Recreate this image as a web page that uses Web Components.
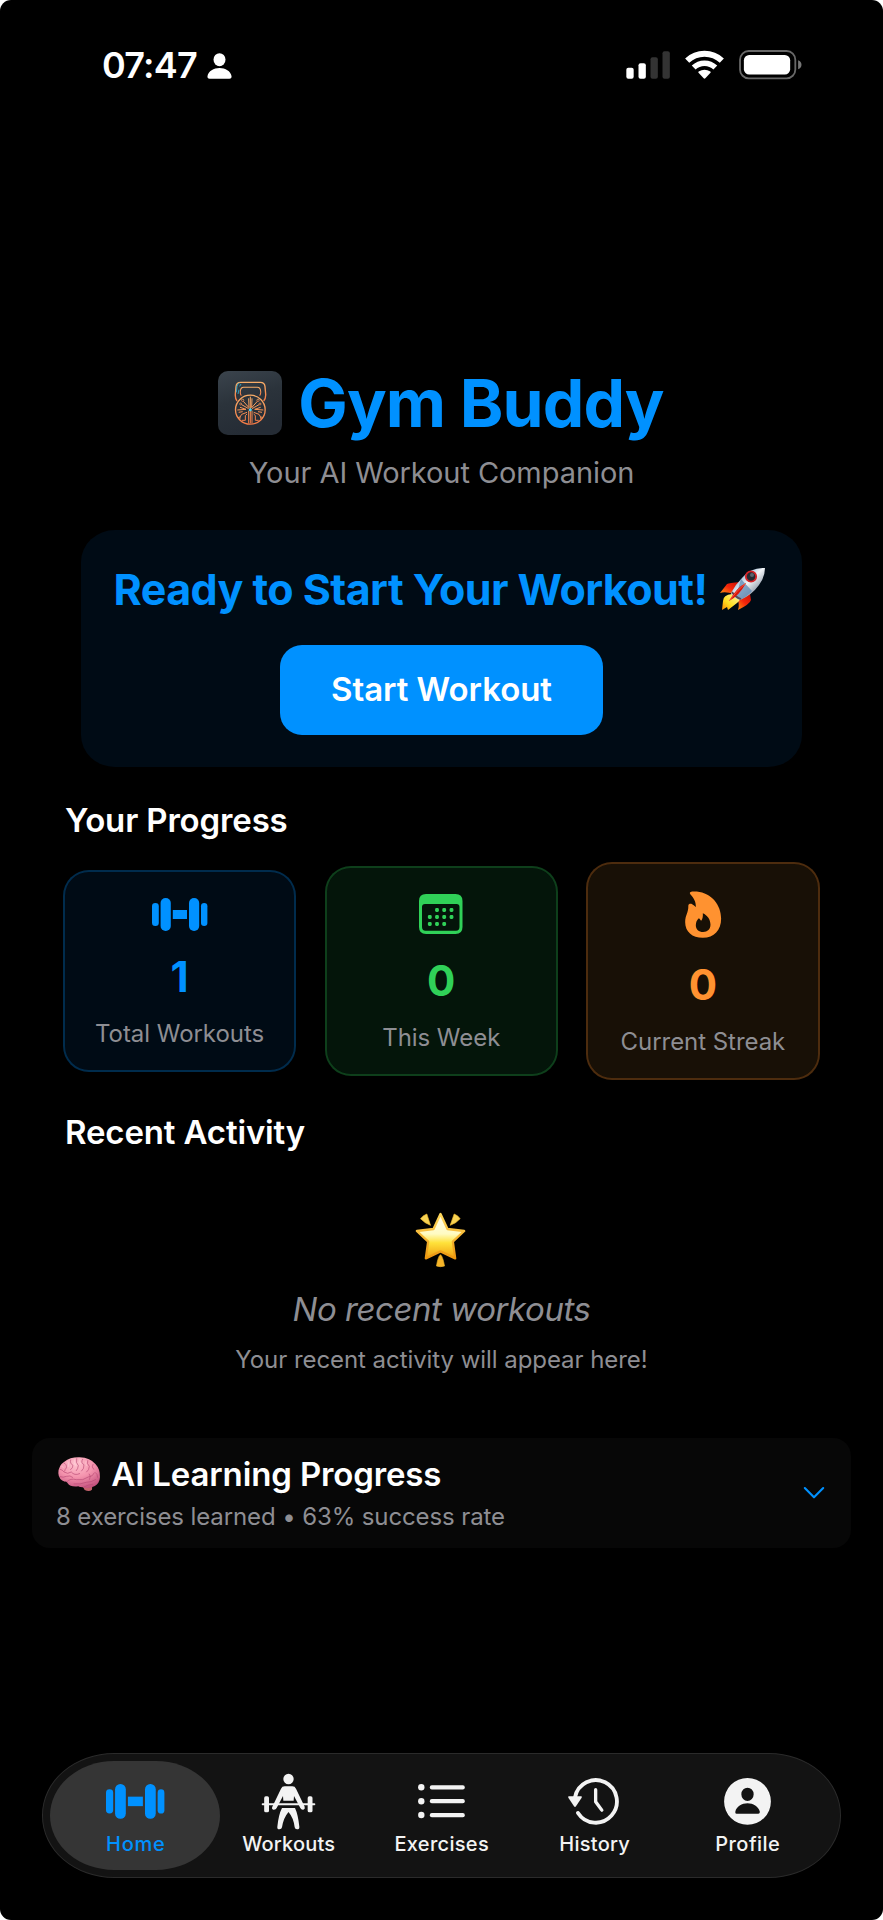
<!DOCTYPE html>
<html lang="en">
<head>
<meta charset="utf-8">
<title>Gym Buddy</title>
<style>
body { margin: 0; background: #fff; font-family: Inter, "Liberation Sans", sans-serif; }
</style>
</head>
<body>
<gym-app>
  <status-bar slot="status" time="07:47"></status-bar>
  <app-header heading="Gym Buddy">Your AI Workout Companion</app-header>
  <start-card heading="Ready to Start Your Workout!">Start Workout</start-card>
  <section-title style="margin-top:33px">Your Progress</section-title>
  <stats-row>
    <stat-card icon="dumbbell" value="1" hue="0,145,255" style="--h:202.5px;--bg:#000b15">Total Workouts</stat-card>
    <stat-card icon="calendar" value="0" hue="48,209,88" style="--h:210.5px;--bg:#04150a">This Week</stat-card>
    <stat-card icon="flame" value="0" hue="255,146,48" style="--h:218px;--bg:#181006">Current Streak</stat-card>
  </stats-row>
  <section-title style="margin-top:31.5px">Recent Activity</section-title>
  <empty-state heading="No recent workouts">Your recent activity will appear here!</empty-state>
  <learning-card heading="AI Learning Progress">8 exercises learned • 63% success rate</learning-card>
  <tab-bar slot="nav">
    <tab-item icon="dumbbellNav" active style="--ls:.755px">Home</tab-item>
    <tab-item icon="lifter" style="--ls:.19px">Workouts</tab-item>
    <tab-item icon="list" style="--ls:.31px">Exercises</tab-item>
    <tab-item icon="history" style="--ls:.26px">History</tab-item>
    <tab-item icon="profile" style="--ls:.5px">Profile</tab-item>
  </tab-bar>
</gym-app>

<script>
const DUMBBELL = '<g fill="currentColor"><rect x="0" y="5" width="6.8" height="23" rx="3.3"/><rect x="8.6" width="10.2" height="33" rx="5"/><rect x="20.8" y="12" width="14.2" height="9"/><rect x="37" width="10.2" height="33" rx="5"/><rect x="49" y="5" width="6.4" height="23" rx="3.2"/></g>';

/* name: [width, height, viewBox, markup] */
const ICONS = {
  dumbbell: [55.4, 33, '0 0 55.4 33', DUMBBELL],
  dumbbellNav: [58.4, 34.8, '0 0 55.4 33', DUMBBELL],
  person: [24.7, 26, '350 38 74 78', '<g fill="#fff"><ellipse cx="387.5" cy="58" rx="18" ry="19.5"/><path d="M358 115C353 115 350.500 112 351.500 107C354 92 370 83 387.500 83C405 83 421 92 423.500 107C424.500 112 422 115 417 115Z"/></g>'],
  signal: [44, 28, '49 47 132 84', '<rect x="50" y="97" width="22" height="33" rx="6" fill="#fff"/><rect x="86.500" y="84" width="22" height="46" rx="6" fill="#fff"/><rect x="122.500" y="66" width="22" height="64" rx="6" fill="#333"/><rect x="158.500" y="48" width="22" height="82" rx="6" fill="#333"/>'],
  wifi: [39, 29, '226 44 117 87', '<g fill="none" stroke="#fff"><path d="M232.500 76A76 76 0 0 1 336.500 76" stroke-width="18"/><path d="M252 96.500A47 47 0 0 1 317 96.500" stroke-width="16.500"/></g><path d="M266.500 112Q265 110 267 108.500Q284.500 98.500 302 108.500Q304 110 302.500 112L287 129Q284.500 131 282 129Z" fill="#fff"/>'],
  battery: [62.700, 29.300, '386.500 44.500 188 88', '<rect x="389.500" y="47.500" width="166" height="82" rx="26" fill="none" stroke="#686868" stroke-width="5.500"/><rect x="401" y="59.500" width="139" height="58.500" rx="16" fill="#fff"/><path d="M564 75Q574 79 574 88.500Q574 98 564 102Z" fill="#777"/>'],
  logo: [64, 64, '54 63 192 192', `<defs><linearGradient id="bg" x1="0" y1="0" x2="0.300" y2="1"><stop offset="0" stop-color="#3b444d"/><stop offset=".5" stop-color="#2b333b"/><stop offset="1" stop-color="#252c35"/></linearGradient><linearGradient id="or" x1="0" y1="0" x2="0" y2="1"><stop offset="0" stop-color="#f8ad68"/><stop offset="1" stop-color="#f47a46"/></linearGradient></defs>
    <rect x="54" y="63" width="192" height="192" rx="30" fill="url(#bg)"/>
    <g fill="none" stroke="url(#or)" stroke-width="4">
    <path d="M111 153Q105 145 106 132L108 110Q109 97 122 97L181 97Q194 97 195 110L197 132Q198 145 191 153"/>
    <path d="M124 137Q120 132 121 124Q122 112 131 112L172 112Q181 112 182 124Q183 132 179 137" stroke-width="3.200"/>
    <ellipse cx="151" cy="179" rx="44.500" ry="43.500" stroke-width="4"/>
    <g stroke-width="3"><path d="M151 140L151 220M146 145L147 173L130 154M156 145L155 173L172 154M146 176L125 164M120 172L138 178L112 180M156 176L177 164M182 172L164 178L190 180M146 182L146 220M156 182L156 219M141 187L125 193L119 203M141 192L136 197L136 211L126 211M161 187L177 193L183 203M161 192L166 197L166 211L176 211M116 187L128 185M186 187L174 185"/></g>
    <g stroke-width="2.200"><circle cx="128" cy="151" r="3.500"/><circle cx="174" cy="151" r="3.500"/><circle cx="122" cy="162" r="3"/><circle cx="180" cy="162" r="3"/><circle cx="118" cy="204" r="3"/><circle cx="184" cy="204" r="3"/></g></g>
    <path d="M109 127L111 109Q112 102 118 99M114 132L117 119M119 109L123 102" stroke="#2cb3d8" stroke-width="2.500" fill="none"/><circle cx="151" cy="179" r="4.500" fill="#45d5f5"/>`],
  rocket: [47, 44, '0 0 47 44', `<defs><linearGradient id="b" x1="0" y1="0" x2="1" y2="1"><stop offset=".25" stop-color="#8fb4d4"/><stop offset=".48" stop-color="#f2f5f8"/><stop offset=".75" stop-color="#8e9aa8"/></linearGradient><linearGradient id="f" x1="1" y1="0" x2="0" y2="1"><stop offset="0" stop-color="#c80f05"/><stop offset=".5" stop-color="#f4260b"/><stop offset="1" stop-color="#ff9a10"/></linearGradient><linearGradient id="y" x1="1" y1="0" x2="0" y2="1"><stop offset="0" stop-color="#fff8a6"/><stop offset=".6" stop-color="#ffdf22"/><stop offset="1" stop-color="#ff8a00"/></linearGradient></defs>
    <path d="M21 15Q10 16 8 17L1 26Q6 24 15 27Z" fill="url(#f)"/><path d="M31 27L32 33Q31 37 19 43Q21 38 18 30Z" fill="url(#f)"/>
    <path d="M13 27Q4 28 4 34L3 43L8 40L9 43L18 36Q22 33 20 31Z" fill="url(#y)"/>
    <path d="M46 1Q32 0 23 11Q16 18 12 26Q14 31 21 33Q33 28 40 18Q46 10 46 1Z" fill="url(#b)"/>
    <path d="M22 12L33 24Q29 29 21 33Q18 32 16 30Q20 20 22 12Z" fill="#5d8ab5" opacity=".75"/>
    <path d="M13 25Q16 30 22 32" stroke="#5a4b52" stroke-width="1.800" fill="none"/>
    <path d="M27 16Q18 20 10 34Q20 29 27 16" fill="#d9150d"/><path d="M27 16Q19 22 10 34" stroke="#ff6842" stroke-width=".8" fill="none"/>
    <circle cx="32" cy="9.500" r="5.200" fill="#242a32" stroke="#d52428" stroke-width="1.800"/><circle cx="33" cy="8" r="2" fill="#5c6470"/>`],
  calendar: [43.500, 40, '0 0 43.500 40', '<g fill="currentColor"><path fill-rule="evenodd" d="M7 0H36.500Q43.500 0 43.500 7V33Q43.500 40 36.500 40H7Q0 40 0 33V7Q0 0 7 0ZM6 10Q3 10 3 13V33Q3 36.700 6.500 36.700H37Q40.500 36.700 40.500 33V13Q40.500 10 37.500 10Z"/>' + [[18,16],[25.200,16],[32.500,16],[10.800,23],[18,23],[25.200,23],[32.500,23],[10.800,30],[18,30],[25.200,30]].map(([x,y]) => `<rect x="${x-1.900}" y="${y-1.900}" width="3.800" height="3.800" rx="1.300"/>`).join('') + '</g>'],
  flame: [36.300, 47, '734.500 302.500 109 141', '<path fill="currentColor" fill-rule="evenodd" d="M749 309C748 304 756 303 770 304C815 309 843 345 843 385C843 420 822 443 788 443C756 443 735 424 735 396C735 375 745 368 744.500 347C744.500 341 751 340 756 342C761 344 765 349 767 351C768 335 760 322 751 313ZM788 369C802 375 811 388 811 403C811 417 802 425.500 789 425.500C776 425.500 767 417 767 405C767 396 770 390 776 384C779 385 781 390 783 392C787 388 789 378 788 369Z"/>'],
  star: [51, 55, '583.500 64 153 165', `<defs><linearGradient id="s" x1="0" y1="0" x2="0" y2="1"><stop offset="0" stop-color="#fffdf0"/><stop offset=".45" stop-color="#fffbc2"/><stop offset=".65" stop-color="#ffe23a"/><stop offset="1" stop-color="#ef9d10"/></linearGradient><linearGradient id="e" x1="0" y1="0" x2="0" y2="1"><stop offset="0" stop-color="#ffd95c"/><stop offset="1" stop-color="#ec960f"/></linearGradient></defs>
    <path d="M660 70L681 115L731 121L697 153L704 203L660 182L616 203L623 153L589 121L639 115Z" fill="url(#s)" stroke="url(#e)" stroke-width="7" stroke-linejoin="round"/>
    <g fill="#f8d354" stroke="#efb62b" stroke-width="2" stroke-linejoin="round"><path d="M600 84Q608 74 619 70L630 104Q612 97 600 84ZM719 84Q712 74 701 70L689 104Q708 97 719 84Z"/><path d="M660 192Q667 198 672 226Q660 230 648 226Q652 199 660 192Z" fill="#f6b428"/></g>`],
  brain: [42.300, 35.300, '113 113 127 106', `<defs><radialGradient id="p" cx=".42" cy=".22" r=".85"><stop offset="0" stop-color="#ffc3cf"/><stop offset=".5" stop-color="#f493ad"/><stop offset="1" stop-color="#c14d7b"/></radialGradient></defs>
    <path d="M183 196Q190 203 193 212Q207 219 215 211Q218 203 211 194Z" fill="#c4626c"/>
    <path d="M114 162Q114 138 132 127Q150 113 178 114Q210 115 226 135Q240 150 239 174Q238 193 222 201Q206 209 193 205Q178 204 174 201Q150 204 142 192Q140 186 134 187Q115 182 114 162Z" fill="url(#p)"/>
    <g fill="none" stroke="#b94a74" stroke-width="2.300" stroke-linecap="round" opacity=".85"><path d="M140 187Q150 176 168 181Q188 185 204 173Q218 172 222 161M119 150Q126 151 131 158Q142 166 153 158Q162 170 178 163M131 131Q140 134 138 146Q134 149 133 155M151 122Q148 133 158 138Q158 146 151 151M169 118Q166 131 174 139Q173 149 168 154M187 120Q180 130 191 136Q192 148 184 155M202 124Q199 134 207 141Q207 152 199 158M218 135Q212 143 220 150M161 194Q180 196 198 189Q213 189 226 181M191 203Q202 196 217 195M119 172Q129 176 138 171Q150 167 157 174M226 160Q232 164 232 174M207 164Q213 170 208 180"/></g>
    <g fill="none" stroke="#ffe0e6" stroke-width="2" stroke-linecap="round" opacity=".6"><path d="M143 127Q147 133 144 142M162 121Q159 131 165 138M179 119Q175 127 181 134M197 126Q194 133 199 139M124 140Q128 139 129 145"/></g>`],
  chevron: [22, 14, '0 0 22 14', '<path d="M1.800 2L11 11.300L20.200 2" fill="none" stroke="#0091ff" stroke-width="2.100" stroke-linecap="round" stroke-linejoin="round"/>'],
  lifter: [55, 56.700, '694 98 165 170', `<g fill="currentColor"><circle cx="776.500" cy="116" r="15.500"/><path d="M765 138H788Q796 138 799 145L825 199Q827 206 821 208Q815 209 812 203L793 167L792 181H761L760 167L741 203Q738 209 731 208Q725 206 728 199L754 145Q757 138 765 138Z"/><rect x="703.500" y="168" width="14.500" height="48" rx="5"/><rect x="834" y="168" width="14.500" height="48" rx="5"/><path d="M757 203H796Q805 222 809 259Q810 267 802 267Q796 267 795 261Q792 233 776.500 215Q761 233 757 261Q756 267 749 267Q742 267 743 259Q747 222 757 203Z"/></g><path d="M754 185.500H799M754 199H799" stroke="#131313" stroke-width="5"/><rect x="696" y="188.500" width="161" height="6.500" rx="3" fill="currentColor"/>`],
  list: [47, 34, '0 0 47 34', '<g fill="currentColor"><circle cx="3.300" cy="3.300" r="3.200"/><circle cx="3.300" cy="17.200" r="3.200"/><circle cx="3.300" cy="31" r="3.200"/><rect x="11.800" y="1.200" width="35" height="4.200" rx="2"/><rect x="11.800" y="15.100" width="35" height="4.200" rx="2"/><rect x="11.800" y="29" width="35" height="4.200" rx="2"/></g>'],
  history: [51.300, 47.300, '383 113 154 142', '<g fill="none" stroke="currentColor" stroke-linecap="round" stroke-linejoin="round"><path d="M404 174A63.500 64 0 1 1 413 221" stroke-width="11.500"/><path d="M466 151V187L484.500 212.500" stroke-width="10"/></g><path d="M386 171H422Q426 171 424 175L407 201Q404 205 401 201L384 175Q382 171 386 171Z" fill="currentColor"/>'],
  profile: [47, 47, '855 114 141 141', '<path fill="currentColor" fill-rule="evenodd" d="M925.500 114A70 70 0 0 1 925.500 254.500A70 70 0 0 1 925.500 114ZM925.500 143A18.500 20 0 0 0 925.500 183A18.500 20 0 0 0 925.500 143ZM893 221.500H958Q963 221.500 962.500 215C959 199 942 189.500 925.500 189.500C909 189.500 892 199 889 215Q888 221.500 893 221.500Z"/>']
};

function icon(name) {
  const [w, h, box, body] = ICONS[name];
  return `<svg width="${w}" height="${h}" viewBox="${box}" aria-hidden="true">${body}</svg>`;
}

class Base extends HTMLElement {
  connectedCallback() {
    if (this.shadowRoot) return;
    const t = document.createElement('template');
    t.innerHTML = `<style>*{box-sizing:border-box}svg{display:block;flex:none;overflow:visible}div,span{white-space:nowrap}${this.css()}</style>${this.html()}`;
    this.attachShadow({ mode: 'open' }).append(t.content.cloneNode(true));
  }
  at(n) { return this.getAttribute(n); }
}

customElements.define('gym-app', class extends Base {
  css() { return `:host{display:flex;flex-direction:column;box-sizing:border-box;width:883px;height:1920px;background:#000;border-radius:11px;overflow:hidden;color:#fff}
    main{flex:1;display:flex;flex-direction:column;padding-top:240px}`; }
  html() { return `<slot name="status"></slot><main><slot></slot></main><slot name="nav"></slot>`; }
});

customElements.define('status-bar', class extends Base {
  css() { return `:host{display:flex;box-sizing:border-box;height:131px;padding:0 81.500px 0 102px;align-items:flex-start;justify-content:space-between}
    .l{display:flex;align-items:center;gap:10px;height:40px;margin-top:45px;font-size:36px;font-weight:600;letter-spacing:-.757px;line-height:40px}
    .l svg{margin-top:1px}.r{display:flex;align-items:center;height:30px;margin-top:49.500px}
    .r svg:nth-child(2){margin-left:15px}.r svg:nth-child(3){margin-left:14.500px}`; }
  html() { return `<div class="l"><span>${this.at('time')}</span>${icon('person')}</div><div class="r">${icon('signal')}${icon('wifi')}${icon('battery')}</div>`; }
});

customElements.define('app-header', class extends Base {
  css() { return `:host{display:flex;flex-direction:column;align-items:center}
    .t{display:flex;align-items:center;gap:16px;height:64px;margin-right:1px;color:#0091ff;font-weight:700;font-size:66px;letter-spacing:-.909px;line-height:64px}
    .s{margin-top:19.500px;height:36px;line-height:36px;font-size:29px;letter-spacing:-.07px;color:#8e8e93}`; }
  html() { return `<div class="t">${icon('logo')}<span>${this.at('heading')}</span></div><div class="s"><slot></slot></div>`; }
});

customElements.define('start-card', class extends Base {
  css() { return `:host{display:flex;flex-direction:column;align-items:center;box-sizing:border-box;width:721px;height:236.500px;margin:39.500px auto 0;padding-top:33.500px;border-radius:34px/32px;background:#000b15}
    .t{display:flex;align-items:center;gap:12px;height:50px;margin-right:3px;line-height:50px;font-size:43px;font-weight:700;letter-spacing:-.557px;color:#0091ff}
    button{all:unset;box-sizing:border-box;margin-top:31.500px;width:323.500px;height:89.500px;border-radius:22px;background:#0091ff;color:#fff;text-align:center;font-size:33px;font-weight:600;letter-spacing:-.05px;line-height:89.500px}`; }
  html() { return `<div class="t"><span>${this.at('heading')}</span>${icon('rocket')}</div><button><slot></slot></button>`; }
});

customElements.define('section-title', class extends Base {
  css() { return `:host{display:block;padding-left:65px;height:40px;line-height:40px;font-size:33px;font-weight:600;letter-spacing:-.15px}`; }
  html() { return `<slot></slot>`; }
});

customElements.define('stats-row', class extends Base {
  css() { return `:host{display:grid;grid-template-columns:repeat(3,1fr);column-gap:28.500px;align-items:center;height:218px;margin:22.500px 63.500px 0 63px}`; }
  html() { return `<slot></slot>`; }
});

customElements.define('stat-card', class extends Base {
  css() { const c = this.at('hue'); return `:host{display:flex;flex-direction:column;align-items:center;box-sizing:border-box;height:var(--h);border:2px solid rgba(${c},.3);border-radius:26px;background:var(--bg);background-clip:padding-box;padding:26.500px 0 16.500px;color:rgb(${c})}
    .i{flex:1}.v{height:50px;line-height:50px;font-size:42px;font-weight:700}
    .k{margin-top:17px;height:30px;margin-bottom:5px;line-height:30px;font-size:24px;letter-spacing:-.05px;color:#8e8e93}`; }
  html() { return `<div class="i">${icon(this.at('icon'))}</div><div class="v">${this.at('value')}</div><div class="k"><slot></slot></div>`; }
});

customElements.define('empty-state', class extends Base {
  css() { return `:host{display:flex;flex-direction:column;align-items:center;padding-top:60px;color:#8e8e93}
    svg{margin-right:3px}
    .t{margin-top:22px;height:40px;line-height:40px;font-size:33px;font-style:italic;letter-spacing:-.454px}
    .s{margin-top:16.500px;height:30px;line-height:30px;font-size:24px;letter-spacing:-.06px}`; }
  html() { return `${icon('star')}<div class="t">${this.at('heading')}</div><div class="s"><slot></slot></div>`; }
});

customElements.define('learning-card', class extends Base {
  css() { return `:host{display:flex;align-items:center;justify-content:space-between;box-sizing:border-box;height:110px;margin:63px 32px 0;padding:0 26px 0 24px;border-radius:18px;background:#070707}
    .t{display:flex;align-items:center;gap:11px;margin-left:2px;height:40px;line-height:40px;font-size:33px;font-weight:600;letter-spacing:-.143px}
    .s{margin-top:7.500px;height:30px;line-height:30px;font-size:24px;letter-spacing:-.112px;color:#8e8e93}`; }
  html() { return `<div><div class="t">${icon('brain')}<span>${this.at('heading')}</span></div><div class="s"><slot></slot></div></div>${icon('chevron')}`; }
});

customElements.define('tab-bar', class extends Base {
  css() { return `:host{display:grid;grid-template-columns:repeat(5,153px);box-sizing:border-box;flex:none;width:799px;height:125px;margin:0 42px 42px;padding-left:15.500px;border:1.500px solid #2b2b2b;border-radius:72px/62px;background:#131313}`; }
  html() { return `<slot></slot>`; }
});

customElements.define('tab-item', class extends Base {
  css() { return `:host{display:flex;flex-direction:column;align-items:center;box-sizing:border-box;color:#f3f3f3;padding-top:7px}
    :host([active]){color:#0091ff}
    .p{display:flex;flex-direction:column;align-items:center;width:170px;margin:0 -8.500px;height:109px;border-radius:64px/54.500px}
    :host([active]) .p{background:#353535}
    .i{display:flex;align-items:center;justify-content:center;height:80px}
    .k{margin:-9px 0 0 1.500px;height:24px;line-height:24px;font-size:20px;font-weight:500;letter-spacing:var(--ls)}`; }
  html() { return `<div class="p"><div class="i">${icon(this.at('icon'))}</div><div class="k"><slot></slot></div></div>`; }
});
</script>
</body>
</html>
